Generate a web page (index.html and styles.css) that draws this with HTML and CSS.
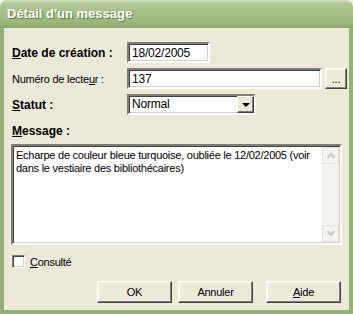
FILE: index.html
```html
<!DOCTYPE html>
<html lang="fr">
<head>
  <meta charset="UTF-8" />
  <title>Détail d'un message</title>
  <link rel="stylesheet" href="styles.css">
</head>
<body>
  <div class="window">
    <div class="titlebar">Détail d'un message</div>
    <div class="client">
      <div class="form">
        <label class="bold"><u>D</u>ate de création :</label>
        <div class="field date">18/02/2005</div>

        <label>Numéro de lecte<u>u</u>r :</label>
        <div class="line">
          <div class="field reader">137</div>
          <div class="btn small">...</div>
        </div>

        <label class="bold"><u>S</u>tatut :</label>
        <div class="field select">
          <span class="value">Normal</span>
          <span class="drop"><span class="tri"></span></span>
        </div>
      </div>

      <div class="msg-label bold"><u>M</u>essage :</div>
      <div class="memo">
        <div class="memo-text">Echarpe de couleur bleue turquoise, oubliée le 12/02/2005 (voir dans le vestiaire des bibliothécaires)</div>
        <div class="scroll">
          <div class="sbtn"><span class="chev up"></span></div>
          <div class="track"></div>
          <div class="sbtn"><span class="chev down"></span></div>
        </div>
      </div>

      <div class="check-row">
        <span class="check"></span>
        <span><u>C</u>onsulté</span>
      </div>

      <div class="buttons">
        <div class="btn">OK</div>
        <div class="btn">Annuler</div>
        <div class="btn help"><u>A</u>ide</div>
      </div>
    </div>
  </div>
</body>
</html>
```

FILE: styles.css
```css
body {
  margin: 0;
  background: #f4f3ee;
  font-family: 'Liberation Sans', Arial, sans-serif;
  font-size: 11px;
  letter-spacing: -0.25px;
  color: #000;
}
.window {
  width: 353px;
  height: 314px;
  display: flex;
  flex-direction: column;
}
.titlebar {
  height: 28px;
  box-sizing: border-box;
  padding: 6px 0 0 7px;
  border-radius: 7px 7px 0 0;
  background: linear-gradient(to bottom, #d4e1bf 0, #b3c998 3px, #a6bf89 12px, #9ab77c 22px, #8dab6e 27px, #7e9d60 28px);
  color: #fff;
  font-weight: bold;
  font-size: 13px;
  letter-spacing: 0;
  text-shadow: 1px 1px 0 #5e7a45;
}
.client {
  flex: 1;
  background: #ece9d8;
  border: 4px solid #93b077;
  border-top: none;
  padding: 14px 0 0 7px;
}
.bold {
  font-weight: bold;
  font-size: 12px;
  letter-spacing: 0;
}
u {
  text-decoration: underline;
}
.form {
  display: grid;
  grid-template-columns: 116px auto;
  grid-auto-rows: 21px;
  row-gap: 5px;
  align-items: center;
}
.form label {
  padding-left: 1px;
}
.field {
  box-sizing: border-box;
  height: 21px;
  background: #fff;
  border: 2px solid;
  border-color: #7f7d74 #fff #fff #7f7d74;
  box-shadow: inset 1px 1px #404040, inset -1px -1px #d4d0c8;
  padding: 2px 3px;
  font-size: 12px;
  letter-spacing: -0.2px;
  line-height: 15px;
}
.date {
  width: 83px;
}
.line {
  display: flex;
  gap: 3px;
}
.reader {
  width: 195px;
}
.select {
  width: 129px;
  display: flex;
  justify-content: space-between;
  padding: 0 0 0 3px;
  line-height: 17px;
}
.drop {
  width: 17px;
  height: 17px;
  box-sizing: border-box;
  background: #ece9d8;
  border: 1px solid;
  border-color: #fff #404040 #404040 #fff;
  box-shadow: inset -1px -1px #808080;
  display: flex;
  align-items: center;
  justify-content: center;
}
.tri {
  width: 0;
  height: 0;
  border-left: 4px solid transparent;
  border-right: 4px solid transparent;
  border-top: 4px solid #000;
}
.btn {
  box-sizing: border-box;
  width: 75px;
  height: 22px;
  background: #ece9d8;
  border: 1px solid;
  border-color: #fff #404040 #404040 #fff;
  box-shadow: inset -1px -1px #808080, inset 1px 1px #f6f5ee;
  display: flex;
  align-items: center;
  justify-content: center;
}
.btn.small {
  width: 22px;
  height: 21px;
}
.msg-label {
  margin-top: 10px;
  height: 13px;
  line-height: 13px;
  padding-left: 1px;
}
.memo {
  margin-top: 6px;
  width: 331px;
  height: 101px;
  box-sizing: border-box;
  background: #fff;
  border: 2px solid;
  border-color: #7f7d74 #fff #fff #7f7d74;
  box-shadow: inset 1px 1px #404040, inset -1px -1px #d4d0c8;
  display: flex;
}
.memo-text {
  flex: 1;
  padding: 3px 3px 0 3px;
  line-height: 13px;
}
.scroll {
  width: 17px;
  margin: 1px 1px 1px 0;
  display: flex;
  flex-direction: column;
  background: #f5f4ef;
}
.sbtn {
  height: 17px;
  box-sizing: border-box;
  background: #f4f3ee;
  border: 1px solid #e5e3d8;
  display: flex;
  align-items: center;
  justify-content: center;
}
.track {
  flex: 1;
}
.chev {
  width: 4px;
  height: 4px;
  border-left: 2px solid #c9c7ba;
  border-top: 2px solid #c9c7ba;
}
.chev.up {
  transform: rotate(45deg);
  margin-top: 3px;
}
.chev.down {
  transform: rotate(225deg);
  margin-top: -3px;
}
.check-row {
  margin-top: 10px;
  display: flex;
  align-items: center;
  gap: 5px;
  padding-left: 1px;
}
.check {
  width: 13px;
  height: 13px;
  box-sizing: border-box;
  background: #fff;
  border: 1px solid;
  border-color: #808080 #fff #fff #808080;
  box-shadow: inset 1px 1px #404040, inset -1px -1px #d4d0c8;
}
.buttons {
  margin-top: 13px;
  display: flex;
  padding-left: 86px;
  gap: 6px;
}
.help {
  margin-left: 7px;
}
```
